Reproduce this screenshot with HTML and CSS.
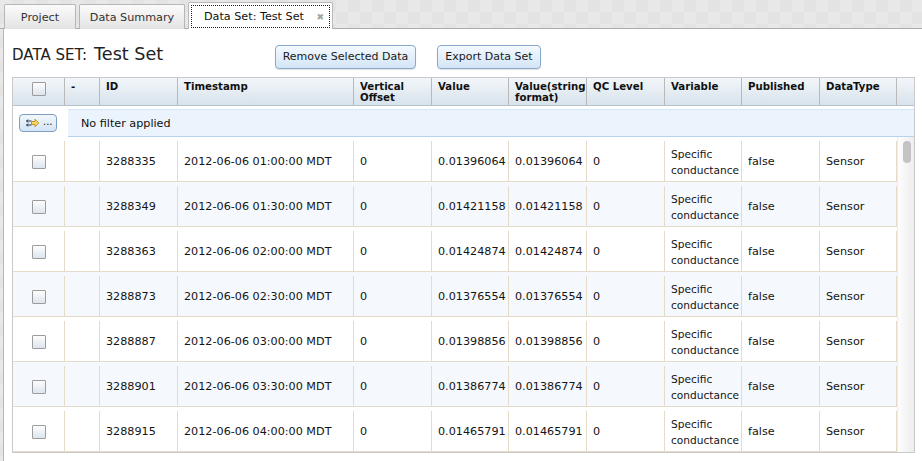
FILE: index.html
```html
<!DOCTYPE html>
<html lang="en">
<head>
<meta charset="utf-8">
<title>Data Set: Test Set</title>
<link rel="stylesheet" href="styles.css">
</head>
<body>
<div class="app">
  <div class="tabbar">
    <div class="tab tab-project">Project</div>
    <div class="tab tab-summary">Data Summary</div>
    <div class="tab tab-active"><span class="tab-focus"><span class="tab-label">Data Set: Test Set</span><span class="tab-close">✖</span></span></div>
  </div>
  <div class="panel">
    <div class="titlebar">
      <h1 class="title"><span class="title-label">DATA SET:</span> <span class="title-name">Test Set</span></h1>
      <div class="actions">
        <button class="btn btn-remove">Remove Selected Data</button>
        <button class="btn btn-export">Export Data Set</button>
      </div>
    </div>
    <div class="grid">
      <div class="grid-head">
        <div class="hcell c-chk"><span class="chk"></span></div>
        <div class="hcell c-dash">-</div>
        <div class="hcell c-id">ID</div>
        <div class="hcell c-ts">Timestamp</div>
        <div class="hcell c-vo">Vertical Offset</div>
        <div class="hcell c-val">Value</div>
        <div class="hcell c-vs">Value(string format)</div>
        <div class="hcell c-qc">QC Level</div>
        <div class="hcell c-var">Variable</div>
        <div class="hcell c-pub">Published</div>
        <div class="hcell c-type">DataType</div>
        <div class="head-fill"></div>
      </div>
      <div class="filter-row">
        <div class="filter-left">
          <button class="filter-btn"><svg class="filter-icon" width="14" height="10" viewBox="0 0 14 10"><path d="M0.5 3h5M0.5 7h5M2 1.5L0.5 3 2 4.5M2 5.5L0.5 7 2 8.5" fill="none" stroke="#2a3140" stroke-width="1"/><path d="M5.5 3.5h3.5V1.2L12.8 5 9 8.8V6.5H5.5z" fill="#f7d86a" stroke="#b98a12" stroke-width="0.9" stroke-linejoin="round"/></svg><span class="filter-dots">...</span></button>
        </div>
        <div class="filter-text">No filter applied</div>
      </div>
      <div class="grid-body">
        <div class="rows">
          <div class="row">
            <div class="cell c-chk center"><span class="chk"></span></div><div class="cell c-dash"></div><div class="cell c-id">3288335</div><div class="cell c-ts">2012-06-06 01:00:00 MDT</div><div class="cell c-vo">0</div><div class="cell c-val">0.01396064</div><div class="cell c-vs">0.01396064</div><div class="cell c-qc">0</div><div class="cell c-var">Specific conductance</div><div class="cell c-pub">false</div><div class="cell c-type">Sensor</div>
          </div>
          <div class="row alt">
            <div class="cell c-chk center"><span class="chk"></span></div><div class="cell c-dash"></div><div class="cell c-id">3288349</div><div class="cell c-ts">2012-06-06 01:30:00 MDT</div><div class="cell c-vo">0</div><div class="cell c-val">0.01421158</div><div class="cell c-vs">0.01421158</div><div class="cell c-qc">0</div><div class="cell c-var">Specific conductance</div><div class="cell c-pub">false</div><div class="cell c-type">Sensor</div>
          </div>
          <div class="row">
            <div class="cell c-chk center"><span class="chk"></span></div><div class="cell c-dash"></div><div class="cell c-id">3288363</div><div class="cell c-ts">2012-06-06 02:00:00 MDT</div><div class="cell c-vo">0</div><div class="cell c-val">0.01424874</div><div class="cell c-vs">0.01424874</div><div class="cell c-qc">0</div><div class="cell c-var">Specific conductance</div><div class="cell c-pub">false</div><div class="cell c-type">Sensor</div>
          </div>
          <div class="row alt">
            <div class="cell c-chk center"><span class="chk"></span></div><div class="cell c-dash"></div><div class="cell c-id">3288873</div><div class="cell c-ts">2012-06-06 02:30:00 MDT</div><div class="cell c-vo">0</div><div class="cell c-val">0.01376554</div><div class="cell c-vs">0.01376554</div><div class="cell c-qc">0</div><div class="cell c-var">Specific conductance</div><div class="cell c-pub">false</div><div class="cell c-type">Sensor</div>
          </div>
          <div class="row">
            <div class="cell c-chk center"><span class="chk"></span></div><div class="cell c-dash"></div><div class="cell c-id">3288887</div><div class="cell c-ts">2012-06-06 03:00:00 MDT</div><div class="cell c-vo">0</div><div class="cell c-val">0.01398856</div><div class="cell c-vs">0.01398856</div><div class="cell c-qc">0</div><div class="cell c-var">Specific conductance</div><div class="cell c-pub">false</div><div class="cell c-type">Sensor</div>
          </div>
          <div class="row alt">
            <div class="cell c-chk center"><span class="chk"></span></div><div class="cell c-dash"></div><div class="cell c-id">3288901</div><div class="cell c-ts">2012-06-06 03:30:00 MDT</div><div class="cell c-vo">0</div><div class="cell c-val">0.01386774</div><div class="cell c-vs">0.01386774</div><div class="cell c-qc">0</div><div class="cell c-var">Specific conductance</div><div class="cell c-pub">false</div><div class="cell c-type">Sensor</div>
          </div>
          <div class="row">
            <div class="cell c-chk center"><span class="chk"></span></div><div class="cell c-dash"></div><div class="cell c-id">3288915</div><div class="cell c-ts">2012-06-06 04:00:00 MDT</div><div class="cell c-vo">0</div><div class="cell c-val">0.01465791</div><div class="cell c-vs">0.01465791</div><div class="cell c-qc">0</div><div class="cell c-var">Specific conductance</div><div class="cell c-pub">false</div><div class="cell c-type">Sensor</div>
          </div>
        </div>
        <div class="scrollbar"><div class="thumb"></div></div>
      </div>
    </div>
  </div>
</div>
</body>
</html>
```
FILE: styles.css
```css
* { box-sizing: border-box; }
html, body { margin: 0; padding: 0; }
body {
  font-family: "DejaVu Sans", Verdana, sans-serif;
  font-size: 11.2px;
  color: #1a1a1a;
  background: #e5e5e5;
}
.app {
  width: 922px;
  height: 461px;
  display: flex;
  flex-direction: column;
  overflow: hidden;
  background:
    repeating-conic-gradient(#e3e3e3 0 25%, #e8e8e8 0 50%) 0 0 / 24px 24px;
}

/* Tabs */
.tabbar {
  height: 29px;
  display: flex;
  align-items: flex-end;
  padding-left: 4px;
  gap: 3px;
  border-bottom: 1px solid #a9abb3;
  flex: none;
}
.tab {
  height: 25px;
  margin-bottom: -1px;
  border: 1px solid #b6b6b6;
  border-bottom: none;
  border-radius: 2px 2px 0 0;
  background: linear-gradient(#fbfbfb, #e3e3e3);
  color: #333;
  display: flex;
  align-items: center;
  justify-content: center;
  padding-top: 1px;
}
.tab-project { width: 72px; }
.tab-summary { width: 106px; }
.tab-active {
  width: 145px;
  height: 27px;
  background: #fff;
  border-color: #b9b9b9;
  padding: 2px 2px 1px 2px;
  color: #111;
}
.tab-focus {
  width: 100%;
  height: 100%;
  border: 1px dotted #222;
  display: flex;
  align-items: center;
  padding-left: 12px;
  padding-right: 5px;
}
.tab-label { flex: 1; white-space: nowrap; }
.tab-close {
  color: #a3a3a3;
  font-size: 9px;
}

/* Panel */
.panel {
  flex: 1;
  margin-left: 3px;
  border-left: 1px solid #b8b8b8;
  background: #fff;
  padding-left: 8px;
}
.titlebar {
  display: flex;
  align-items: baseline;
  margin-top: 10px;
  height: 24px;
}
.title {
  margin: 0;
  width: 263px;
  font-weight: normal;
  color: #222;
  white-space: nowrap;
}
.title-label { font-size: 15px; }
.title-name { font-size: 17.6px; }
.actions {
  display: flex;
  gap: 21px;
}
.btn {
  font-family: "DejaVu Sans", Verdana, sans-serif;
  font-size: 11px;
  color: #1a1a1a;
  height: 24px;
  padding: 0;
  border: 1px solid #86a9cc;
  border-radius: 4px;
  background: linear-gradient(#f4f9fe, #d3e5f6);
  box-shadow: 0 1px 1px rgba(0, 0, 0, 0.12);
}
.btn-remove { width: 141px; }
.btn-export { width: 104px; }

/* Grid */
.grid {
  margin-top: 14px;
  width: 903px;
  height: 376px;
  border: 1px solid #c9c9c9;
  display: flex;
  flex-direction: column;
  background: #fff;
}
.grid-head {
  display: flex;
  height: 28px;
  border-bottom: 1px solid #b5c1cc;
  background: linear-gradient(#f2f6fa, #d8e3ec);
  flex: none;
}
.hcell {
  border-right: 1px solid #b9b9b9;
  font-weight: bold;
  font-size: 10.2px;
  line-height: 11px;
  color: #111;
  padding: 3px 6px 0 6px;
  overflow: hidden;
}
.hcell.c-chk {
  display: flex;
  justify-content: center;
  padding: 4px 0 0 0;
}
.head-fill { flex: 1; }

.c-chk { width: 52px; }
.c-dash { width: 35px; }
.c-id { width: 78px; }
.c-ts { width: 176px; }
.c-vo { width: 78px; }
.c-val { width: 77px; }
.c-vs { width: 78px; }
.c-qc { width: 78px; }
.c-var { width: 77px; }
.c-pub { width: 78px; }
.c-type { width: 77px; }

.chk {
  display: inline-block;
  width: 14px;
  height: 14px;
  border: 1px solid #9c9c9c;
  border-radius: 1px;
  background: linear-gradient(#fdfdfd, #dde5ee);
}

.filter-row {
  display: flex;
  height: 28px;
  margin-top: 3px;
  flex: none;
}
.filter-left {
  width: 55px;
  display: flex;
  align-items: center;
  padding-left: 6px;
}
.filter-btn {
  width: 38px;
  height: 18px;
  padding: 0 0 0 6px;
  border: 1px solid #7f9ebf;
  border-radius: 4px;
  background: linear-gradient(#f1f7fd, #d2e4f5);
  display: flex;
  align-items: center;
  gap: 3px;
  font-family: "DejaVu Sans", Verdana, sans-serif;
  font-size: 10px;
  color: #222;
}
.filter-icon { display: block; }
.filter-dots { line-height: 10px; margin-top: -2px; }
.filter-text {
  flex: 1;
  border-top: 1px solid #d4e6f7;
  border-bottom: 1px solid #b6d2ec;
  background: #ebf4fd;
  padding-left: 13px;
  display: flex;
  align-items: center;
  color: #111;
}

.grid-body {
  flex: 1;
  display: flex;
  overflow: hidden;
}
.rows {
  width: 884px;
}
.row {
  display: flex;
  height: 45px;
  padding-top: 4px;
  border-bottom: 1px solid #e6dac9;
  background: #fff;
}
.row.alt { background: #f5f9fe; }
.cell {
  height: 40px;
  border-right: 1px solid #e6dac9;
  padding: 1px 6px 0 6px;
  display: flex;
  align-items: center;
  line-height: 16px;
  color: #141414;
  white-space: nowrap;
  overflow: hidden;
}
.cell.c-var {
  white-space: normal;
  font-size: 10.6px;
  padding-right: 0;
}
.cell.center { justify-content: center; padding: 1px 0 0 0; }

.scrollbar {
  width: 17px;
  border-left: 1px solid #ececec;
  background: linear-gradient(to right, #fdfdfd, #ededed);
  padding: 4px 0 0 5px;
}
.thumb {
  width: 8px;
  height: 22px;
  border-radius: 4px;
  background: #c3c3c3;
}
```
